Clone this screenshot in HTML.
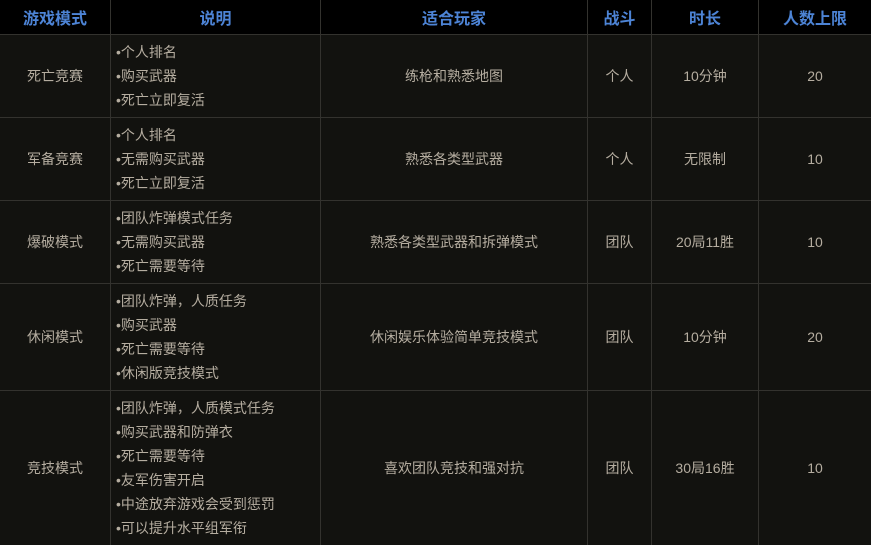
<!DOCTYPE html>
<html><head><meta charset="utf-8"><style>
html,body{margin:0;padding:0;background:#12120f;width:871px;height:545px;overflow:hidden}
table{border-collapse:collapse;table-layout:fixed;width:872px;font-family:"Liberation Sans","Noto Sans CJK SC",sans-serif;font-size:14px;color:#b5ada0;margin-top:-1px;margin-left:-1px}
td,th{border:1px solid #33322e;text-align:center;padding:0;vertical-align:middle}
th{background:#000;color:#4d84d6;font-size:16px;font-weight:bold;height:34px}
td{background:#12120f}
td.d{text-align:left;padding-left:5px;line-height:24px}
tr.r1 td{height:82px}tr.r4 td{height:106px}tr.r5 td{height:154px}
</style></head><body>
<table>
<colgroup><col style="width:111px"><col style="width:210px"><col style="width:267px"><col style="width:64px"><col style="width:107px"><col style="width:113px"></colgroup>
<tr><th>游戏模式</th><th>说明</th><th>适合玩家</th><th>战斗</th><th>时长</th><th>人数上限</th></tr>
<tr class="r1"><td>死亡竞赛</td><td class="d">•个人排名<br>•购买武器<br>•死亡立即复活</td><td>练枪和熟悉地图</td><td>个人</td><td>10分钟</td><td>20</td></tr>
<tr class="r1"><td>军备竞赛</td><td class="d">•个人排名<br>•无需购买武器<br>•死亡立即复活</td><td>熟悉各类型武器</td><td>个人</td><td>无限制</td><td>10</td></tr>
<tr class="r1"><td>爆破模式</td><td class="d">•团队炸弹模式任务<br>•无需购买武器<br>•死亡需要等待</td><td>熟悉各类型武器和拆弹模式</td><td>团队</td><td>20局11胜</td><td>10</td></tr>
<tr class="r4"><td>休闲模式</td><td class="d">•团队炸弹，人质任务<br>•购买武器<br>•死亡需要等待<br>•休闲版竞技模式</td><td>休闲娱乐体验简单竞技模式</td><td>团队</td><td>10分钟</td><td>20</td></tr>
<tr class="r5"><td>竞技模式</td><td class="d">•团队炸弹，人质模式任务<br>•购买武器和防弹衣<br>•死亡需要等待<br>•友军伤害开启<br>•中途放弃游戏会受到惩罚<br>•可以提升水平组军衔</td><td>喜欢团队竞技和强对抗</td><td>团队</td><td>30局16胜</td><td>10</td></tr>
</table>
</body></html>
